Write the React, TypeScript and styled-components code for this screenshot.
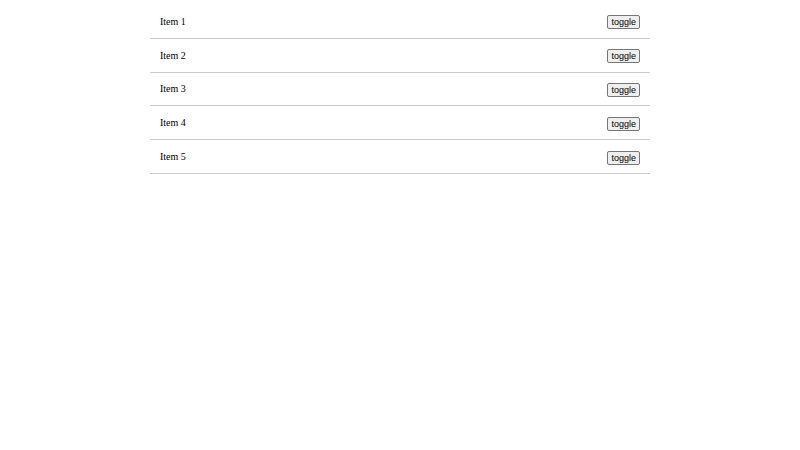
import { useState } from "react";
import styled, { createGlobalStyle } from "styled-components";

const GlobalStyle = createGlobalStyle`
  body {
    margin: 0;
    background: #fff;
    font-family: "Liberation Serif", "Times New Roman", serif;
  }
`

const List = styled.ul`
  list-style: none;
  width: 500px;
  margin: 0 auto;
  padding: 5px 0 0;
`

const Row = styled.li<{ $on?: boolean }>`
  height: 32.8px;
  display: flex;
  align-items: center;
  justify-content: space-between;
  padding: 0 10px;
  border-bottom: 1px solid #ccc;
  font-size: 10px;
  color: ${props => props.$on ? "#888" : "#000"};
`

const Toggle = styled.button`
  font-family: "Liberation Sans", Arial, sans-serif;
  font-size: 9px;
  padding: 0 3px;
  margin-top: 2px;
  height: 14px;
  line-height: 12px;
  background: #efefef;
  border: 1px solid #767676;
  border-radius: 2px;
  color: #000;
`

export default function App() {
  const [items, setItems] = useState(
    [1, 2, 3, 4, 5].map(n => ({ id: n, label: `Item ${n}`, on: false }))
  )

  const flip = (id: number) =>
    setItems(items.map(i => (i.id === id ? { ...i, on: !i.on } : i)))

  return (
    <>
      <GlobalStyle />
      <List>
        {items.map(item => (
          <Row key={item.id} $on={item.on}>
            <span>{item.label}</span>
            <Toggle onClick={() => flip(item.id)}>toggle</Toggle>
          </Row>
        ))}
      </List>
    </>
  )
}
